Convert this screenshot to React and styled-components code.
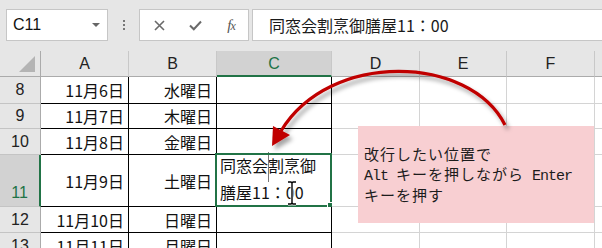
import React from "react";
import styled, { createGlobalStyle } from "styled-components";

const GlobalStyle = createGlobalStyle`
  body {
    margin: 0;
    background: #e6e6e6;
    overflow: hidden;
  }
`;

const CJK = `"Noto Sans CJK JP", "Noto Sans", sans-serif`;
const UI = `"Liberation Sans", "Noto Sans", sans-serif`;
const GREEN = "#217346";

const Page = styled.div`
  position: relative;
  width: 602px;
  height: 248px;
  overflow: hidden;
  background: #e6e6e6;
`;

const FormulaBar = styled.div`
  display: flex;
  align-items: flex-start;
  height: 51px;
  padding: 9px 0 0 6px;
  box-sizing: border-box;
`;

const Box = styled.div`
  display: flex;
  align-items: center;
  height: 32px;
  box-sizing: border-box;
  background: #fff;
  border: 1px solid #c6c6c6;
`;

const NameBox = styled(Box)`
  width: 102px;
  justify-content: space-between;
  padding: 0 7px 0 6px;
  font: 16px ${UI};
  color: #111;
`;

const Caret = styled.span`
  width: 0;
  height: 0;
  border-left: 4px solid transparent;
  border-right: 4px solid transparent;
  border-top: 4px solid #666;
`;

const Grip = styled.div`
  display: flex;
  flex-direction: column;
  align-items: center;
  gap: 2px;
  width: 31px;
  padding-top: 11px;
  & span {
    width: 2px;
    height: 2px;
    background: #777;
  }
`;

const ActionBox = styled(Box)`
  width: 110px;
  display: grid;
  grid-template-columns: repeat(3, 36px);
  justify-items: center;
  padding-left: 1px;
  color: #6a6a6a;
`;

const Fx = styled.span`
  font: italic 15px "Liberation Serif", serif;
  color: #555;
  letter-spacing: -1px;
  & small {
    font-size: 12px;
  }
`;

const FormulaInput = styled(Box)`
  flex: 1;
  margin-left: 3px;
  margin-right: -4px;
  padding-left: 16px;
  font: 16px ${CJK};
  color: #1a1a1a;
`;

const Sheet = styled.div`
  display: grid;
  grid-template-columns: 41px 88px 88px 115px 88px 87px 88px 1fr;
  grid-template-rows: ${(p) => p.$rows};
  background: #fff;
`;

const Corner = styled.div`
  background: #e6e6e6;
  border-right: 1px solid #ababab;
  border-bottom: 1px solid #ababab;
  & svg {
    display: block;
    margin: 5px 0 0 19px;
  }
`;

const ColHead = styled.div`
  display: flex;
  align-items: center;
  justify-content: center;
  box-sizing: border-box;
  font: 16px ${UI};
  color: ${(p) => (p.$active ? GREEN : "#222")};
  background: ${(p) => (p.$active ? "#d2d2d2" : "#e6e6e6")};
  border-right: 1px solid #c8c8c8;
  border-bottom: ${(p) => (p.$active ? `2px solid ${GREEN}` : "1px solid #ababab")};
  padding-top: ${(p) => (p.$active ? "1px" : "0")};
`;

const RowHead = styled.div`
  display: flex;
  justify-content: center;
  align-items: ${(p) => (p.$active ? "flex-end" : "center")};
  padding-bottom: ${(p) => (p.$active ? "4px" : "0")};
  box-sizing: border-box;
  font: 16px ${UI};
  color: ${(p) => (p.$active ? GREEN : "#222")};
  background: ${(p) => (p.$active ? "#d2d2d2" : "#e6e6e6")};
  border-right: ${(p) => (p.$active ? `2px solid ${GREEN}` : "1px solid #ababab")};
  border-bottom: 1px solid #c4c4c4;
`;

const Cell = styled.div`
  position: relative;
  display: flex;
  align-items: center;
  justify-content: ${(p) => (p.$align === "left" ? "flex-start" : "flex-end")};
  box-sizing: border-box;
  padding: 0 4px 0 3px;
  font: 16px ${CJK};
  color: #111;
  background: #fff;
  border-right: 1px solid ${(p) => (p.$ruled ? "#000" : "#d4d4d4")};
  border-bottom: 1px solid ${(p) => (p.$ruled ? "#000" : "#d4d4d4")};
`;

const EditText = styled.div`
  line-height: 27px;
  margin-top: -4px;
  white-space: pre;
`;

const Selection = styled.div`
  position: absolute;
  top: -2px;
  left: -2px;
  right: -1px;
  bottom: -1px;
  border: 2px solid ${GREEN};
  pointer-events: none;
  &::after {
    content: "";
    position: absolute;
    right: -4px;
    bottom: -4px;
    width: 5px;
    height: 5px;
    background: ${GREEN};
    border: 1px solid #fff;
  }
`;

const TextCaret = styled.span`
  position: absolute;
  left: 51px;
  top: -3px;
  width: 1px;
  height: 30px;
  background: #777;
`;

const Callout = styled.div`
  position: absolute;
  left: 358px;
  top: 126px;
  width: 236px;
  height: 97px;
  display: flex;
  align-items: center;
  padding-left: 6px;
  box-sizing: border-box;
  background: #f8cfd2;
  font: 15px ${CJK};
  letter-spacing: 1px;
  line-height: 20.5px;
  color: #1c1c1c;
`;

const Mono = styled.span`
  font: 15px "Liberation Mono", monospace;
  letter-spacing: -1px;
`;

const Overlay = styled.svg`
  position: absolute;
  left: 0;
  top: 0;
  pointer-events: none;
`;

const columns = [
  { name: "A", ruled: true },
  { name: "B", ruled: true },
  { name: "C", ruled: true, active: true },
  { name: "D" },
  { name: "E" },
  { name: "F" },
  { name: "" },
];

const rows = [
  { n: 8, h: 27, a: "11月6日", b: "水曜日" },
  { n: 9, h: 25, a: "11月7日", b: "木曜日" },
  { n: 10, h: 26, a: "11月8日", b: "金曜日" },
  { n: 11, h: 52, a: "11月9日", b: "土曜日", active: true },
  { n: 12, h: 26, a: "11月10日", b: "日曜日" },
  { n: 13, h: 26, a: "11月11日", b: "月曜日" },
];

const Toolbar = () => (
  <FormulaBar>
    <NameBox>
      C11
      <Caret />
    </NameBox>
    <Grip>
      <span />
      <span />
      <span />
    </Grip>
    <ActionBox>
      <svg width="11" height="11" viewBox="0 0 11 11">
        <path d="M1 1 L10 10 M10 1 L1 10" stroke="#6a6a6a" strokeWidth="1.6" />
      </svg>
      <svg width="13" height="11" viewBox="0 0 13 11">
        <path d="M1 5.5 L4.8 9.3 L12 1.5" stroke="#6a6a6a" strokeWidth="2" fill="none" />
      </svg>
      <Fx>
        f<small>x</small>
      </Fx>
    </ActionBox>
    <FormulaInput>同窓会割烹御膳屋11：00</FormulaInput>
  </FormulaBar>
);

const Grid = () => (
  <Sheet $rows={["26px", ...rows.map((r) => `${r.h}px`)].join(" ")}>
    <Corner>
      <svg width="17" height="16" viewBox="0 0 17 16">
        <polygon points="16,0 16,16 0,16" fill="#b4b4b4" />
      </svg>
    </Corner>
    {columns.map((c, i) => (
      <ColHead key={i} $active={c.active}>
        {c.name}
      </ColHead>
    ))}
    {rows.map((r) => (
      <React.Fragment key={r.n}>
        <RowHead $active={r.active}>{r.n}</RowHead>
        <Cell $ruled>{r.a}</Cell>
        <Cell $ruled>{r.b}</Cell>
        <Cell $ruled $align="left">
          {r.active && (
            <>
              <EditText>{"同窓会割烹御\n膳屋11：00"}</EditText>
              <TextCaret />
              <Selection />
            </>
          )}
        </Cell>
        {columns.slice(3).map((c, i) => (
          <Cell key={i} />
        ))}
      </React.Fragment>
    ))}
  </Sheet>
);

export default function App() {
  return (
    <Page>
      <GlobalStyle />
      <Toolbar />
      <Grid />
      <Callout>
        <div>
          改行したい位置で
          <br />
          <Mono>Alt </Mono>キーを押しながら<Mono> Enter</Mono>
          <br />
          キーを押す
        </div>
      </Callout>
      <Overlay width="602" height="248" viewBox="0 0 602 248">
        <defs>
          <filter id="shadow" x="-20%" y="-20%" width="140%" height="160%">
            <feDropShadow dx="3" dy="4" stdDeviation="2" floodColor="#000" floodOpacity="0.35" />
          </filter>
        </defs>
        <g filter="url(#shadow)">
          <path
            d="M505 125 C470 55, 330 50, 281 131"
            stroke="#c00000"
            strokeWidth="3.2"
            fill="none"
          />
          <polygon points="272,146 273,126 290,135" fill="#c00000" />
        </g>
        <g transform="translate(292 193)">
          <path
            d="M-4 -11 L-1 -11 L0 -10 L1 -11 L4 -11 M0 -10 L0 10 M-4 11 L-1 11 L0 10 L1 11 L4 11"
            stroke="#fff"
            strokeWidth="3"
            fill="none"
          />
          <path
            d="M-4 -11 L-1 -11 L0 -10 L1 -11 L4 -11 M0 -10 L0 10 M-4 11 L-1 11 L0 10 L1 11 L4 11"
            stroke="#000"
            strokeWidth="1.4"
            fill="none"
          />
        </g>
      </Overlay>
    </Page>
  );
}
